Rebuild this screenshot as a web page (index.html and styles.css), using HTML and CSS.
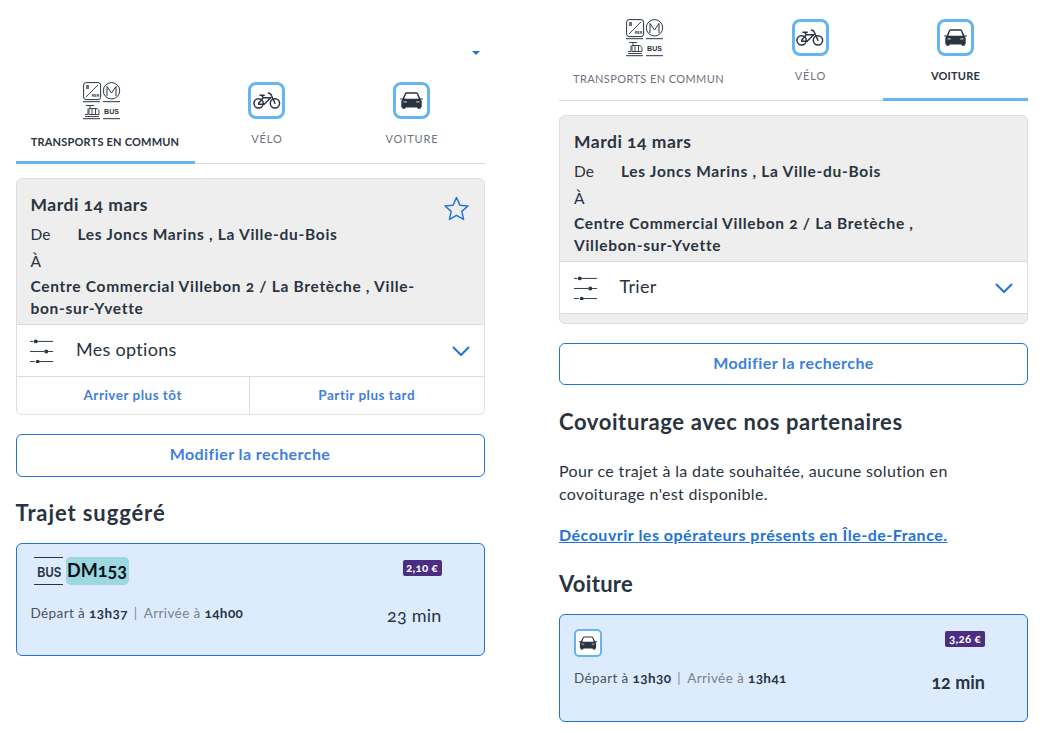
FILE: index.html
```html
<!DOCTYPE html>
<html lang="fr">
<head>
<meta charset="utf-8">
<title>Itinéraires</title>
<link rel="stylesheet" href="styles.css">
</head>
<body>
<svg class="defs" width="0" height="0" aria-hidden="true">
  <defs>
    <symbol id="i-tc" viewBox="0 0 38 38">
      <rect x="0.6" y="0.6" width="17" height="17" rx="2.5" fill="none" stroke="#2a3340" stroke-width="1"/>
      <rect x="3" y="3" width="3" height="4" fill="#2a3340" opacity=".7"/>
      <path d="M3 15 L15 3" stroke="#2a3340" stroke-width=".9" fill="none"/>
      <text x="12.500" y="14.500" class="ic-mini" text-anchor="middle">RER</text>
      <circle cx="28.500" cy="8.800" r="8.200" fill="none" stroke="#2a3340" stroke-width="1"/>
      <path d="M24 14V4.500L28.500 11 33 4.500V14" fill="none" stroke="#2a3340" stroke-width="1"/>
      <path d="M0 19.700h17M20 19.700h17M0 36.700h17M20 36.700h17" stroke="#2a3340" stroke-width="1" fill="none"/>
      <path d="M2 34.500h14M3 23.500h8M7 23.500v3M6 26.500h7c2 0 3 1.500 3 3.500v2.500H6zM2 32.500h3v-6M9 26.500v6M12.500 26.500v6" stroke="#2a3340" stroke-width=".9" fill="none"/>
      <text x="28.500" y="32" class="ic-bus" text-anchor="middle">BUS</text>
    </symbol>
    <symbol id="i-bike" viewBox="0 0 30 20">
      <circle cx="6" cy="13" r="5" fill="none" stroke="#2a3340" stroke-width="1.600"/>
      <circle cx="23.500" cy="13" r="5" fill="none" stroke="#2a3340" stroke-width="1.600"/>
      <path d="M6 13 L11 7 H19 L12 14 H6 M11 7 L9.500 4.500 M7.500 4.500 H12 M23.500 13 L19 3 L16.500 2 M19 7 L12 14" fill="none" stroke="#2a3340" stroke-width="1.600" stroke-linecap="round" stroke-linejoin="round"/>
    </symbol>
    <symbol id="i-car" viewBox="0 0 24 18">
      <path d="M0 6.800h2.600L5 1.500C5.400.6 6 .2 7 .2h10c1 0 1.600.4 2 1.300l2.400 5.300H24v1.100h-2.200c.6.600 1 1.300 1 2.200v5.300c0 .6-.4 1-1 1v1.400h-3.400v-1.400H5.600v1.400H2.200v-1.400c-.6 0-1-.4-1-1v-5.300c0-.9.400-1.600 1-2.200H0zM6.400 1.800 4.400 7.200h15.200l-2-5.400z" fill="#2a3340" fill-rule="evenodd"/>
      <path d="M3.500 10.500h3.500M17 10.500h3.500" stroke="#dfe6ee" stroke-width="1"/>
    </symbol>
    <symbol id="i-sliders" viewBox="0 0 24 24">
      <path d="M0 2h3.500M7 2h17M0 12.500h15M19 12.500h5M0 23h5M9 23h15" stroke="#2a3340" stroke-width="1" fill="none"/>
      <circle cx="6" cy="2" r="2" fill="#2a3340"/>
      <circle cx="17" cy="12.500" r="2" fill="#2a3340"/>
      <circle cx="8" cy="23" r="2" fill="#2a3340"/>
    </symbol>
    <symbol id="i-chevron" viewBox="0 0 18 10">
      <path d="M1 1 L9 9 L17 1" fill="none" stroke="#2173d6" stroke-width="2"/>
    </symbol>
  </defs>
</svg>

<main class="page">
  <section class="panel panel-left">
    <div class="corner-mark"></div>
    <nav class="tabs">
      <div class="tab tab-active">
        <svg class="tab-svg-tc"><use href="#i-tc"/></svg>
        <span class="tab-label tab-label-low">TRANSPORTS EN COMMUN</span>
      </div>
      <div class="tab">
        <span class="mode-box"><svg class="svg-bike"><use href="#i-bike"/></svg></span>
        <span class="tab-label">VÉLO</span>
      </div>
      <div class="tab">
        <span class="mode-box"><svg class="svg-car"><use href="#i-car"/></svg></span>
        <span class="tab-label">VOITURE</span>
      </div>
    </nav>

    <div class="summary">
      <div class="summary-head">
        <div class="summary-date">Mardi 14 mars</div>
        <svg class="star" viewBox="0 0 24 24"><path d="M12 1.500l3.200 7.300 7.800.800-5.900 5.200 1.700 7.700L12 18.500l-6.800 4 1.700-7.700L1 9.600l7.800-.800z" fill="none" stroke="#2173d6" stroke-width="1.400" stroke-linejoin="round"/></svg>
        <div class="summary-from"><span class="from-label">De</span><strong>Les Joncs Marins , La Ville-du-Bois</strong></div>
        <div class="summary-to-label">À</div>
        <strong class="summary-to">Centre Commercial Villebon 2 / La Bretèche , Ville-<br>bon-sur-Yvette</strong>
      </div>
      <div class="option-row">
        <svg class="sliders"><use href="#i-sliders"/></svg>
        <span class="option-text">Mes options</span>
        <svg class="chevron"><use href="#i-chevron"/></svg>
      </div>
      <div class="shift-row">
        <a class="shift">Arriver plus tôt</a>
        <a class="shift">Partir plus tard</a>
      </div>
    </div>

    <button class="modify">Modifier la recherche</button>

    <h2 class="heading heading-trip">Trajet suggéré</h2>

    <article class="trip trip-bus">
      <div class="trip-top">
        <div class="line">
          <span class="bus-mark"><span class="bus-text">BUS</span></span>
          <span class="line-code">DM153</span>
        </div>
        <span class="price">2,10 €</span>
      </div>
      <div class="trip-bottom">
        <p class="times">Départ à <b>13h37</b><i class="sep">|</i><span class="muted">Arrivée à</span> <b>14h00</b></p>
        <span class="duration">23 min</span>
      </div>
    </article>
  </section>

  <section class="panel panel-right">
    <nav class="tabs">
      <div class="tab">
        <svg class="tab-svg-tc"><use href="#i-tc"/></svg>
        <span class="tab-label tab-label-low">TRANSPORTS EN COMMUN</span>
      </div>
      <div class="tab">
        <span class="mode-box"><svg class="svg-bike"><use href="#i-bike"/></svg></span>
        <span class="tab-label">VÉLO</span>
      </div>
      <div class="tab tab-active tab-strong">
        <span class="mode-box"><svg class="svg-car"><use href="#i-car"/></svg></span>
        <span class="tab-label">VOITURE</span>
      </div>
    </nav>

    <div class="summary">
      <div class="summary-head">
        <div class="summary-date">Mardi 14 mars</div>
        <div class="summary-from"><span class="from-label">De</span><strong>Les Joncs Marins , La Ville-du-Bois</strong></div>
        <div class="summary-to-label">À</div>
        <strong class="summary-to">Centre Commercial Villebon 2 / La Bretèche ,<br>Villebon-sur-Yvette</strong>
      </div>
      <div class="option-row">
        <svg class="sliders"><use href="#i-sliders"/></svg>
        <span class="option-text">Trier</span>
        <svg class="chevron"><use href="#i-chevron"/></svg>
      </div>
      <div class="summary-foot"></div>
    </div>

    <button class="modify">Modifier la recherche</button>

    <h2 class="heading heading-partners">Covoiturage avec nos partenaires</h2>
    <p class="note">Pour ce trajet à la date souhaitée, aucune solution en<br>covoiturage n'est disponible.</p>
    <a class="operators">Découvrir les opérateurs présents en Île-de-France.</a>

    <h2 class="heading heading-car">Voiture</h2>

    <article class="trip trip-car">
      <div class="trip-top">
        <span class="mode-box mode-box-small"><svg class="svg-car-small"><use href="#i-car"/></svg></span>
        <span class="price price-car">3,26 €</span>
      </div>
      <div class="trip-bottom">
        <p class="times">Départ à <b>13h30</b><i class="sep">|</i><span class="muted">Arrivée à</span> <b>13h41</b></p>
        <span class="duration duration-strong">12 min</span>
      </div>
    </article>
  </section>
</main>
</body>
</html>
```

FILE: styles.css
```css
* { box-sizing: border-box; }

html, body { margin: 0; padding: 0; }

body {
  background: #fff;
  color: #2a3340;
  font-family: "Lato", "Open Sans", sans-serif;
  font-variant-numeric: oldstyle-nums;
  overflow: hidden;
  height: 733px;
}

.defs { position: absolute; }

.page {
  display: grid;
  grid-template-columns: 469px 469px;
  column-gap: 74.500px;
  padding-left: 15.500px;
}

.panel-left { padding-top: 51px; }
.panel-right { padding-top: 19px; }

.corner-mark {
  width: 0;
  height: 0;
  margin-left: 456.500px;
  margin-bottom: 27px;
  border-left: 4px solid transparent;
  border-right: 4px solid transparent;
  border-top: 4px solid #2173d6;
}

/* Tabs */
.tabs {
  display: grid;
  grid-template-columns: 179px 145px 145px;
  border-bottom: 1px solid #dcdcdc;
  height: 82px;
}

.tab {
  display: flex;
  flex-direction: column;
  align-items: center;
  height: 82px;
}

.tab-active { border-bottom: 3px solid #64b5f0; }

.tab-svg-tc { width: 38px; height: 38px; display: block; margin-right: 7px; }

.mode-box {
  width: 37px;
  height: 37px;
  margin-right: 1px;
  border: 3px solid #64b5f0;
  border-radius: 8px;
  display: flex;
  align-items: center;
  justify-content: center;
  background: #fff;
}

.svg-bike { width: 28px; height: 19px; }
.svg-car { width: 23px; height: 17px; }

.tab-label {
  margin-top: 12px;
  font-size: 11px;
  line-height: 16px;
  letter-spacing: 0.9px;
  color: #6d7480;
  white-space: nowrap;
}

.tab-label-low { margin-top: 14px; letter-spacing: 0.4px; }
.tab-active .tab-label-low { color: #2a3340; font-weight: 700; letter-spacing: 0.2px; }
.tab-strong .tab-label { color: #2a3340; font-weight: 700; letter-spacing: 0.2px; }

.ic-mini { font: 700 3.500px "Liberation Sans", sans-serif; fill: #2a3340; }
.ic-bus { font: 700 7px "Liberation Sans", sans-serif; fill: #2a3340; }

/* Summary */
.summary {
  margin-top: 14px;
  background: #eee;
  border: 1px solid #dedede;
  border-radius: 6px;
  overflow: hidden;
}

.summary-head {
  position: relative;
  padding: 15px 14px 5px;
  font-size: 15.500px;
  line-height: 22px;
  letter-spacing: 0.7px;
}

.summary-date {
  font-size: 17.500px;
  font-weight: 700;
  letter-spacing: 0.5px;
}

.star {
  position: absolute;
  top: 17px;
  right: 15px;
  width: 25px;
  height: 25px;
}

.summary-from { margin-top: 7px; display: flex; }
.from-label { width: 47px; letter-spacing: 0; }
.summary-to-label { margin-top: 5px; }
.summary-to { display: block; margin-top: 3px; }
strong { font-weight: 700; }

.option-row {
  display: flex;
  align-items: center;
  height: 52px;
  padding: 0 14px 0 13.500px;
  background: #fff;
  border-top: 1px solid #dcdcdc;
}

.sliders { width: 23px; height: 24px; flex: none; }

.option-text {
  margin-left: 23px;
  padding-bottom: 4px;
  font-size: 18px;
  letter-spacing: 0.3px;
  flex: 1;
}

.chevron { width: 18px; height: 10px; flex: none; }

.shift-row {
  display: grid;
  grid-template-columns: 232.500px 1fr;
  height: 38px;
  background: #fff;
  border-top: 1px solid #dcdcdc;
}

.shift {
  display: flex;
  align-items: center;
  justify-content: center;
  padding-bottom: 2px;
  font-size: 13.500px;
  font-weight: 700;
  letter-spacing: 0.5px;
  color: #3f80dc;
}

.shift + .shift { border-left: 1px solid #dcdcdc; }

.summary-foot { height: 10px; border-top: 1px solid #dcdcdc; }

.modify {
  display: block;
  width: 100%;
  height: 43px;
  margin-top: 19px;
  padding: 0 0 4px;
  background: #fff;
  border: 1px solid #2173d6;
  border-radius: 6px;
  color: #3f80dc;
  font: inherit;
  font-size: 16px;
  font-weight: 700;
  letter-spacing: 0.43px;
}

.panel-right .modify { height: 42px; }

.heading {
  margin: 22px 0 16px;
  font-size: 22px;
  line-height: 28px;
  font-weight: 700;
  letter-spacing: 0.6px;
}

.heading-trip { letter-spacing: 0.9px; }
.heading-partners { margin-top: 23px; }

.note {
  margin: 23px 0 0;
  font-size: 16px;
  line-height: 23px;
  letter-spacing: 0.35px;
}

.operators {
  display: block;
  margin-top: 18px;
  font-size: 16px;
  line-height: 23px;
  font-weight: 700;
  letter-spacing: 0.5px;
  color: #2173d6;
  text-decoration: underline;
}

.heading-car { margin-top: 24px; margin-bottom: 16px; letter-spacing: 0.3px; }

/* Trip cards */
.trip {
  background: #dcecfe;
  border: 1px solid #2173d6;
  border-radius: 6px;
  padding: 13px 42px 0 14px;
  height: 113px;
}

.trip-car { height: 108px; padding-top: 14px; }

.trip-top {
  display: flex;
  justify-content: space-between;
  align-items: flex-start;
  height: 29px;
}

.line { display: flex; align-items: center; gap: 3px; }

.bus-mark {
  width: 29px;
  margin-left: 3px;
  height: 28px;
  border-top: 1px solid #2a3340;
  border-bottom: 1px solid #2a3340;
  font-family: "Liberation Sans", sans-serif;
  font-weight: 700;
  font-size: 14.500px;
  line-height: 28px;
  text-align: center;
  white-space: nowrap;
}

.bus-text { display: inline-block; transform: scaleX(.78); }

.line-code {
  background: #9dd7e0;
  border-radius: 5px;
  padding: 0 2px 0 1.500px;
  width: 63px;
  height: 28px;
  font-size: 18px;
  font-weight: 700;
  line-height: 27px;
  color: #0a0f18;
  white-space: nowrap;
}

.price {
  margin-top: 3px;
  background: #4b2e83;
  border-radius: 2px;
  color: #fff;
  width: 39px;
  height: 16px;
  font-size: 11.500px;
  font-weight: 700;
  letter-spacing: 0.3px;
  line-height: 15px;
  text-align: center;
  white-space: nowrap;
}

.price-car { margin-top: 2px; width: 40px; }

.mode-box-small {
  width: 28px;
  height: 28px;
  margin-right: 0;
  border-width: 2px;
  border-radius: 5px;
}

.svg-car-small { width: 18px; height: 14px; }

.trip-bottom {
  display: flex;
  justify-content: space-between;
  align-items: flex-start;
  margin-top: 17px;
}

.trip-car .trip-bottom { margin-top: 10px; }

.times {
  margin: 0;
  font-size: 13.500px;
  line-height: 20px;
  letter-spacing: 0.4px;
  color: #4b525c;
}

.times b { font-weight: 700; color: #2a3340; }

.sep { font-style: normal; margin: 0 6px; color: #7f8894; }
.muted { color: #7a808a; }

.duration {
  font-size: 18px;
  line-height: 24px;
  letter-spacing: 0.2px;
}

.duration-strong { margin-top: 2px; font-weight: 700; letter-spacing: 0; }
```
